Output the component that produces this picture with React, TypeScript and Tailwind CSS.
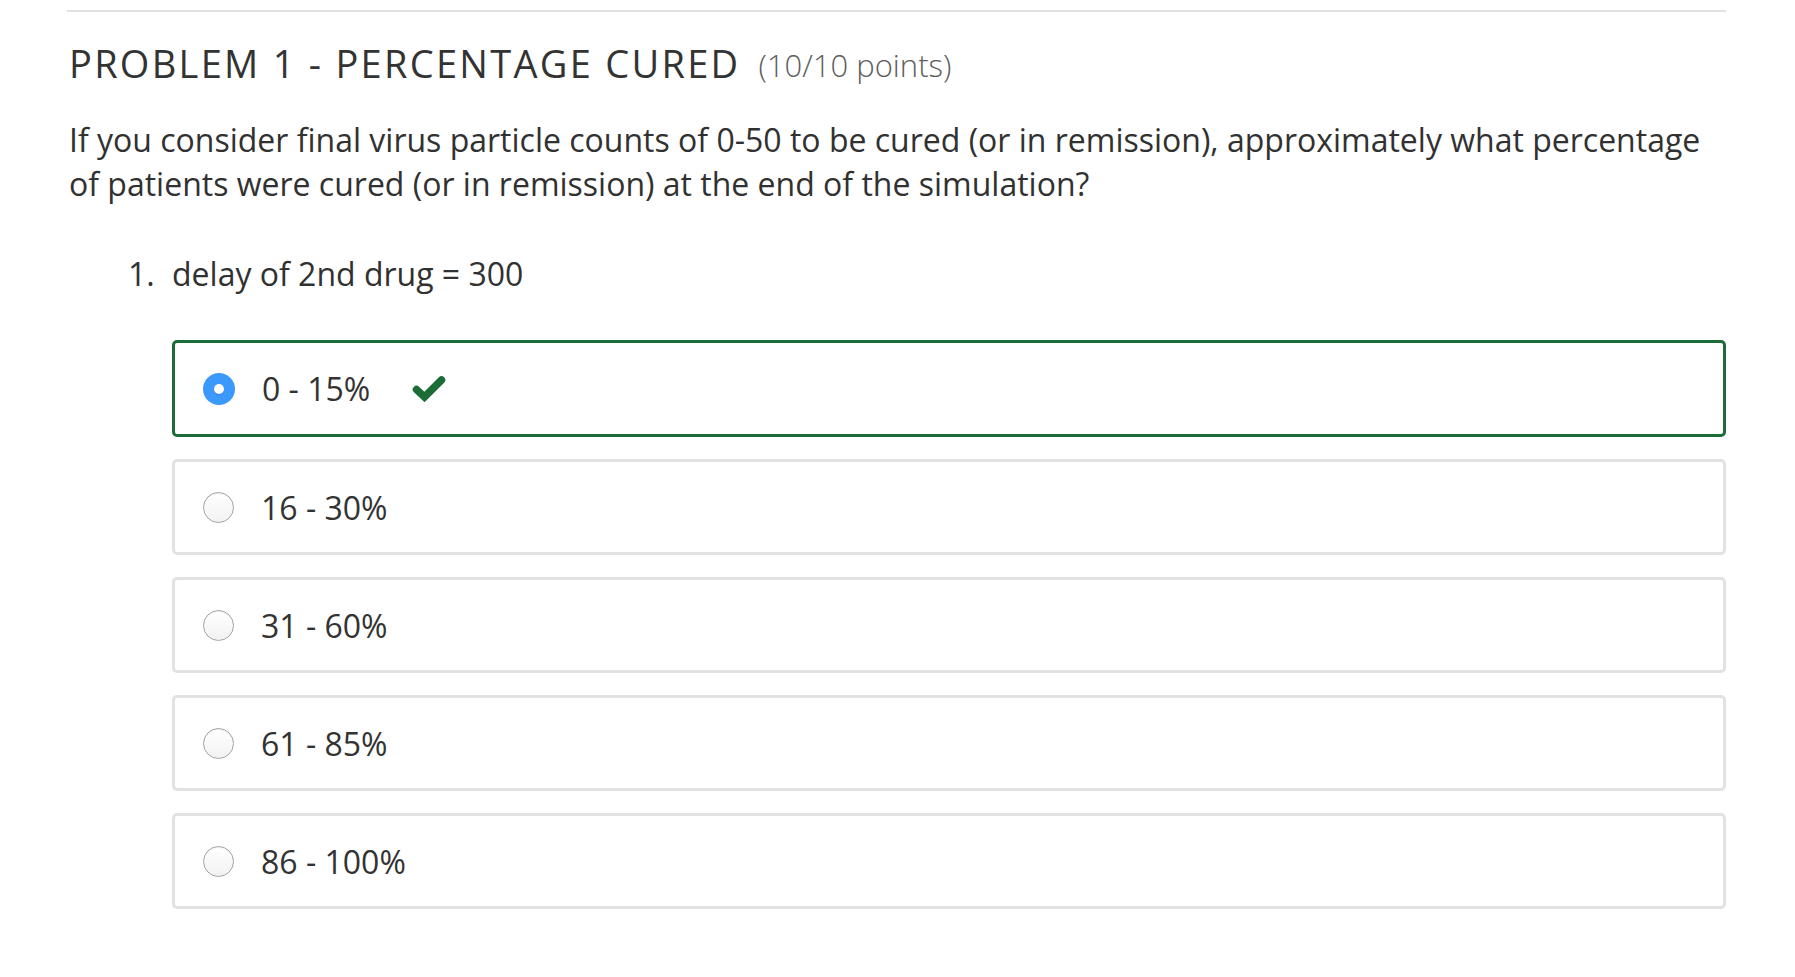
import React from "react";

const options = ["0 - 15%", "16 - 30%", "31 - 60%", "61 - 85%", "86 - 100%"];

function Radio({ checked }: { checked: boolean }) {
  if (checked) {
    return (
      <span className="flex h-[32px] w-[32px] shrink-0 items-center justify-center rounded-full bg-[#3c99fc]">
        <span className="h-[10px] w-[10px] rounded-full bg-white shadow-[0_1px_1px_rgba(0,0,0,0.15)]" />
      </span>
    );
  }
  return (
    <span className="h-[31px] w-[31px] shrink-0 rounded-full border border-[#a4a4a4] bg-gradient-to-b from-white to-[#f2f2f2] shadow-[inset_0_1px_1px_rgba(0,0,0,0.06)]" />
  );
}

function Check() {
  return (
    <svg width="34" height="27" viewBox="0 0 34 27" className="ml-[42px] shrink-0">
      <polyline
        points="4.5,14.5 12.5,22 29.5,5"
        fill="none"
        stroke="#1b6c36"
        strokeWidth="7.5"
        strokeLinecap="round"
        strokeLinejoin="miter"
      />
    </svg>
  );
}

export default function App() {
  return (
    <div className="min-h-[977px] w-full bg-white pl-[67px] pr-[69px] pt-[10px] font-['Open_Sans',sans-serif] text-[#313131]">
      <div className="h-[2px] w-full bg-[#e2e2e2]" />
      <h2 className="mt-[32px] flex items-baseline text-[38px] leading-[38px] font-normal tracking-[0.06em] text-[#333333]">
        <span className="pl-[2px]">PROBLEM 1 - PERCENTAGE CURED</span>
        <span className="relative top-[-1px] ml-[18px] text-[31px] font-light tracking-normal text-[#5e5e5e]">(10/10 points)</span>
      </h2>
      <p className="mt-[33px] pl-[2px] text-[32px] leading-[44px]">
        If you consider final virus particle counts of 0-50 to be cured (or in remission), approximately what percentage
        of patients were cured (or in remission) at the end of the simulation?
      </p>
      <ol className="mt-[46px] pl-[105px]">
        <li className="relative">
          <span className="absolute left-[-44px] top-0 text-[32px] leading-[43px]">1.</span>
          <div className="text-[32px] leading-[43px]">delay of 2nd drug = 300</div>
          <div className="mt-[45px] flex flex-col gap-[22px]">
            {options.map((o, i) => (
              <div
                key={o}
                className={
                  i === 0
                    ? "flex h-[97px] items-center rounded-[5px] border-[3px] border-[#1b6c36] pl-[28px]"
                    : "flex h-[96px] items-center rounded-[5px] border-[3px] border-[#e2e2e2] pl-[28px]"
                }
              >
                <Radio checked={i === 0} />
                <span className="ml-[27px] text-[32px] leading-[43px] text-[#333333]">{o}</span>
                {i === 0 && <Check />}
              </div>
            ))}
          </div>
        </li>
      </ol>
    </div>
  );
}
